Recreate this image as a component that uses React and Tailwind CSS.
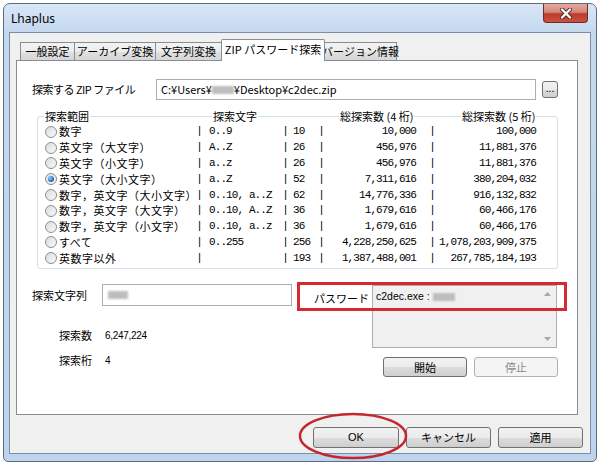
const rows = [
  ["数字", "0..9", "10", "10,000", "100,000"],
  ["英文字（大文字）", "A..Z", "26", "456,976", "11,881,376"],
  ["英文字（小文字）", "a..z", "26", "456,976", "11,881,376"],
  ["英文字（大小文字）", "a..Z", "52", "7,311,616", "380,204,032", true],
  ["数字，英文字（大小文字）", "0..10, a..Z", "62", "14,776,336", "916,132,832"],
  ["数字，英文字（大文字）", "0..10, A..Z", "36", "1,679,616", "60,466,176"],
  ["数字，英文字（小文字）", "0..10, a..z", "36", "1,679,616", "60,466,176"],
  ["すべて", "0..255", "256", "4,228,250,625", "1,078,203,909,375"],
  ["英数字以外", "", "193", "1,387,488,001", "267,785,184,193"],
];

const tabs = [
  ["一般設定", "w-[55px]"],
  ["アーカイブ変換", "w-[81px]"],
  ["文字列変換", "w-[66px]"],
  ["ZIP パスワード探索", "w-[104px]"],
  ["バージョン情報", "w-[73px]"],
];

function Btn({ children, disabled, className }) {
  return (
    <div
      className={`flex items-center justify-center rounded-[3px] border leading-none ${
        disabled
          ? "border-[#adb2b5] bg-[#f4f4f4] text-[#8a8a8a]"
          : "border-[#707070] bg-[linear-gradient(#f2f2f2,#ebebeb_50%,#dddddd_50%,#cfcfcf)] text-black"
      } ${className}`}
    >
      {children}
    </div>
  );
}

function Blur({ w }) {
  return <span className={`inline-block h-[8px] ${w} bg-[#bdbdbd] blur-[1px] align-middle`} />;
}

function Radio({ on }) {
  return (
    <div className="flex h-[12px] w-[12px] shrink-0 items-center justify-center rounded-full border border-[#8a8f96] bg-[linear-gradient(135deg,#dcdcdc,#fafafa)]">
      {on && <div className="h-[6px] w-[6px] rounded-full bg-[radial-gradient(circle_at_35%_35%,#8fd0ff,#1d5fb8_70%,#0f3c7a)]" />}
    </div>
  );
}

function Bar() {
  return <span className="w-[6px] shrink-0 text-center">|</span>;
}

export default function App() {
  return (
    <div className="relative h-[465px] w-[600px] overflow-hidden bg-white pl-[3px] pt-[3px] font-['Noto_Sans_CJK_JP','Noto_Sans',sans-serif] text-[11px] text-black">
      <div className="flex h-[459px] w-[594px] flex-col rounded-t-[7px] rounded-b-[5px] border border-[#5d6b7e] bg-[linear-gradient(#d9e7f6,#c4d9ef_28px,#bdd4ec)]">
        {/* title bar */}
        <div className="flex h-[28px] shrink-0 items-start justify-between">
          <span className="pl-[7px] pt-[7px] font-['Noto_Sans',sans-serif] text-[12px] leading-[16px]">Lhaplus</span>
          <div className="mr-[8px] flex h-[19px] w-[45px] items-center justify-center rounded-b-[4px] border border-t-0 border-[#6e2c25] bg-[linear-gradient(#e5aa9f,#d3887c_45%,#bb3a2c_55%,#c9523f)]">
            <svg width="14" height="11" viewBox="0 0 14 11">
              <path d="M3 1.5 L11 9.5 M11 1.5 L3 9.5" stroke="#5a2420" strokeWidth="4" strokeLinecap="round" />
              <path d="M3 1.5 L11 9.5 M11 1.5 L3 9.5" stroke="#ffffff" strokeWidth="2.4" strokeLinecap="round" />
            </svg>
          </div>
        </div>

        {/* client area */}
        <div className="mx-[5px] flex h-[422px] flex-col border border-[#7a8ea6] bg-[#f0f0f0]">
          {/* tabs */}
          <div className="mt-[6px] flex h-[21px] items-end pl-[10px]">
            {tabs.map(([t, w], i) =>
              i === 3 ? (
                <div
                  key={t}
                  className={`relative z-10 -mx-[1px] -mb-[1px] flex h-[22px] ${w} items-center justify-center rounded-t-[2px] border border-b-0 border-[#898c95] bg-white pb-[2px] whitespace-nowrap`}
                >
                  {t}
                </div>
              ) : (
                <div
                  key={t}
                  className={`flex h-[18px] ${w} items-center justify-center border border-b-0 border-[#898c95] bg-[linear-gradient(#f3f3f3,#ececec_50%,#e0e0e0_50%,#d6d6d6)] whitespace-nowrap ${
                    i > 0 && i !== 4 ? "border-l-0" : ""
                  }`}
                >
                  {t}
                </div>
              )
            )}
          </div>

          {/* tab panel */}
          <div className="ml-[6px] flex h-[355px] w-[562px] flex-col border border-[#898c95] bg-white">
            {/* zip file */}
            <div className="mt-[18px] flex h-[21px] items-center">
              <div className="w-[139px] pl-[15px] tracking-[-0.5px]">探索する ZIP ファイル</div>
              <div className="flex h-[21px] w-[380px] items-center border border-[#abadb3] bg-white pl-[4px]">
                C:¥Users¥<Blur w="w-[22px]" />¥Desktop¥c2dec.zip
              </div>
              <Btn className="ml-[6px] h-[17px] w-[16px] pb-[4px] text-[10px]">...</Btn>
            </div>

            {/* group */}
            <div className="mt-[16px] ml-[20px] flex h-[153px] w-[521px] flex-col rounded-[3px] border border-[#d5dfe5]">
              <div className="-mt-[8px] flex h-[14px] items-center leading-[14px]">
                <div className="w-[174px] pl-[6px]">
                  <span className="bg-white px-[1px]">探索範囲</span>
                </div>
                <div className="w-[127px]">
                  <span className="bg-white px-[1px]">探索文字</span>
                </div>
                <div className="w-[122px]">
                  <span className="bg-white px-[1px]">総探索数 (4 桁)</span>
                </div>
                <div>
                  <span className="bg-white px-[1px]">総探索数 (5 桁)</span>
                </div>
              </div>
              <div className="mt-[1px] flex flex-col">
                {rows.map(([label, chars, n, d4, d5, on]) => (
                  <div key={label} className="flex h-[15.8px] items-center">
                    <div className="flex w-[158px] items-center gap-[2px] pl-[7px]">
                      <Radio on={on} />
                      <span className="leading-none tracking-[0.5px] whitespace-nowrap">{label}</span>
                    </div>
                    <div className="flex items-center font-['Liberation_Mono',monospace] text-[11px] tracking-[-0.9px] leading-none">
                      <Bar />
                      <span className="w-[80px] pl-[7px] whitespace-pre">{chars}</span>
                      <Bar />
                      <span className="w-[30px] pl-[5px]">{n}</span>
                      <Bar />
                      <span className="w-[92px] text-right">{d4}</span>
                      <span className="w-[13px]" />
                      <Bar />
                      <span className="w-[101px] text-right">{d5}</span>
                    </div>
                  </div>
                ))}
              </div>
            </div>

            {/* bottom section */}
            <div className="mt-[13px] flex">
              <div className="mt-[2px] flex w-[279px] flex-col">
                <div className="flex h-[22px] items-center">
                  <div className="w-[85px] pl-[15px]">探索文字列</div>
                  <div className="flex h-[22px] w-[190px] items-center border border-[#abadb3] bg-white pl-[5px]">
                    <Blur w="w-[20px]" />
                  </div>
                </div>
                <div className="mt-[21px] flex h-[16px] items-center pl-[42px]">
                  <span className="w-[46px]">探索数</span>
                  <span className="font-['Liberation_Sans',sans-serif] text-[10px] tracking-[-0.3px]">6,247,224</span>
                </div>
                <div className="mt-[9px] flex h-[16px] items-center pl-[42px]">
                  <span className="w-[46px]">探索桁</span>
                  <span className="font-['Liberation_Sans',sans-serif] text-[10px]">4</span>
                </div>
              </div>
              <div className="flex flex-col">
                <div className="flex items-start">
                  <div className="w-[76px] pt-[8px] pl-[18px]">パスワード</div>
                  <div className="mt-[3px] flex h-[63px] w-[185px] border border-[#abadb3] bg-[#f0f0f0]">
                    <div className="flex-1 pt-[3px] pl-[3px] font-['Liberation_Sans',sans-serif] text-[10.5px]">
                      c2dec.exe : <Blur w="w-[22px]" />
                    </div>
                    <div className="flex w-[17px] flex-col items-center justify-between py-[6px]">
                      <svg width="7" height="4" viewBox="0 0 7 4"><path d="M0 4 L3.5 0 L7 4Z" fill="#a8a8a8" /></svg>
                      <svg width="7" height="4" viewBox="0 0 7 4"><path d="M0 0 L3.5 4 L7 0Z" fill="#a8a8a8" /></svg>
                    </div>
                  </div>
                </div>
                <div className="mt-[9px] flex gap-[7px] pl-[87px]">
                  <Btn className="h-[20px] w-[84px]">開始</Btn>
                  <Btn disabled className="h-[20px] w-[84px]">停止</Btn>
                </div>
              </div>
            </div>
          </div>

          {/* dialog buttons */}
          <div className="mt-[12px] flex justify-end gap-[7px] pr-[7px]">
            <Btn className="h-[21px] w-[86px] font-['Liberation_Sans',sans-serif]">OK</Btn>
            <Btn className="h-[21px] w-[85px]">キャンセル</Btn>
            <Btn className="h-[21px] w-[85px]">適用</Btn>
          </div>
        </div>
      </div>

      {/* annotations */}
      <div className="absolute left-[297px] top-[282px] h-[29px] w-[270px] border-[3px] border-[#d62a2f]" />
      <svg className="absolute left-[297px] top-[411px]" width="112" height="50" viewBox="0 0 112 50">
        <ellipse cx="56" cy="25" rx="53" ry="22" fill="none" stroke="#c4262e" strokeWidth="2.5" />
      </svg>
    </div>
  );
}
